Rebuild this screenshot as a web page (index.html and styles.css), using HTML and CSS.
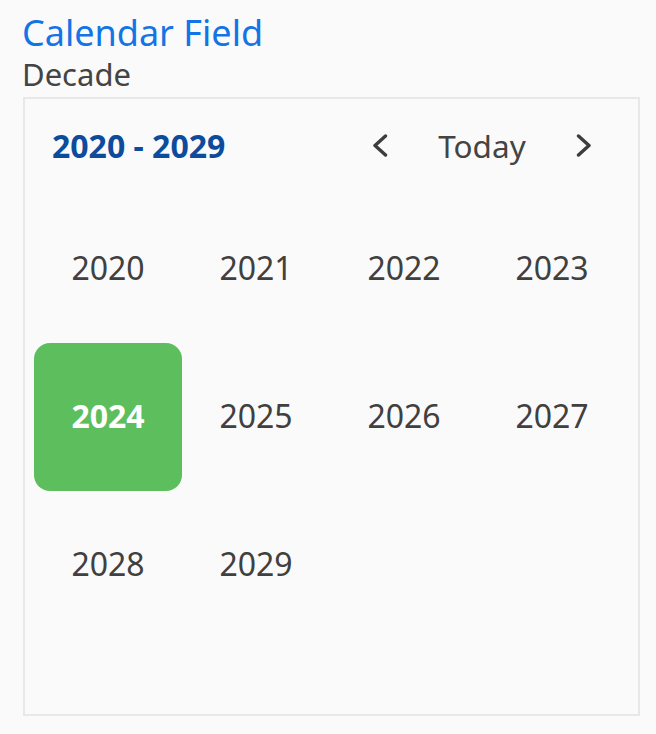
FILE: index.html
```html
<!DOCTYPE html>
<html lang="en">
<head>
<meta charset="utf-8">
<title>Calendar Field</title>
<link rel="stylesheet" href="styles.css">
</head>
<body>
<div class="page">
  <h1 class="title">Calendar Field</h1>
  <div class="label">Decade</div>
  <div class="calendar">
    <div class="header">
      <div class="range">2020 - 2029</div>
      <div class="nav">
        <button class="nav-btn prev" aria-label="Previous">
          <svg width="16" height="24" viewBox="0 0 16 24"><path d="M13.5 3 L3 12.5 L13.5 22" fill="none" stroke="#3d3d3d" stroke-width="3.4" stroke-linecap="round" stroke-linejoin="round"/></svg>
        </button>
        <button class="today">Today</button>
        <button class="nav-btn next" aria-label="Next">
          <svg width="16" height="24" viewBox="0 0 16 24"><path d="M2.5 3 L13 12.5 L2.5 22" fill="none" stroke="#3d3d3d" stroke-width="3.4" stroke-linecap="round" stroke-linejoin="round"/></svg>
        </button>
      </div>
    </div>
    <div class="grid">
      <div class="cell">2020</div>
      <div class="cell">2021</div>
      <div class="cell">2022</div>
      <div class="cell">2023</div>
      <div class="cell selected">2024</div>
      <div class="cell">2025</div>
      <div class="cell">2026</div>
      <div class="cell">2027</div>
      <div class="cell">2028</div>
      <div class="cell">2029</div>
    </div>
  </div>
</div>
</body>
</html>
```

FILE: styles.css
```css
html, body {
  margin: 0;
  padding: 0;
  background: #fafafa;
}
body {
  font-family: "Noto Sans", "Open Sans", sans-serif;
  color: #404040;
}
.page {
  padding: 11px 0 0 22px;
}
.title {
  margin: 0;
  font-size: 36px;
  font-weight: 400;
  line-height: 44px;
  color: #1374e6;
}
.label {
  font-size: 31px;
  line-height: 38px;
  color: #444;
}
.calendar {
  box-sizing: border-box;
  width: 617px;
  height: 619px;
  border: 2px solid #e8e8e8;
  margin-top: 4px;
  margin-left: 1px;
  background: #fafafa;
}
.header {
  display: flex;
  align-items: center;
  justify-content: space-between;
  height: 92px;
  padding: 0 0 4px 27px;
}
.range {
  font-size: 32px;
  font-weight: 700;
  color: #0d4c9c;
}
.nav {
  display: flex;
  align-items: center;
}
button {
  font-family: inherit;
  background: none;
  border: none;
  padding: 0;
  margin: 0;
  cursor: pointer;
}
.nav-btn {
  display: flex;
  align-items: center;
  justify-content: center;
  width: 48px;
  height: 48px;
}
.today {
  font-size: 31.5px;
  color: #444;
  width: 156px;
  text-align: center;
}
.next {
  margin-right: 30px;
}
.grid {
  display: grid;
  grid-template-columns: repeat(4, 148px);
  grid-auto-rows: 148px;
  padding-left: 9px;
}
.cell {
  display: flex;
  align-items: center;
  justify-content: center;
  padding-bottom: 3px;
  font-size: 32px;
  color: #404040;
}
.cell.selected {
  background: #5cbe5d;
  color: #fff;
  font-weight: 700;
  border-radius: 16px;
}
```
